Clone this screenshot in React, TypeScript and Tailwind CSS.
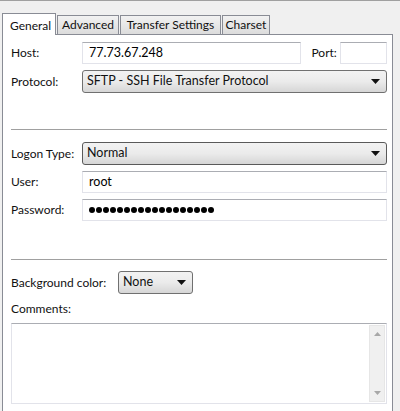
import React from 'react';

const font = { fontFamily: 'Lato, "Liberation Sans", sans-serif' };

const tabs = [
  { label: 'General', w: 'w-[54px]' },
  { label: 'Advanced', w: 'w-[62px]' },
  { label: 'Transfer Settings', w: 'w-[101px]' },
  { label: 'Charset', w: 'w-[48px]' },
];

function Arrow() {
  return (
    <svg width="9" height="5" viewBox="0 0 9 5" className="shrink-0">
      <path d="M0 0 H9 L4.5 5 Z" fill="#111" />
    </svg>
  );
}

function Select({ value, className = '', dark = false }: { value: string; className?: string; dark?: boolean }) {
  return (
    <div
      className={`flex items-center justify-between h-[23px] rounded-[3px] border ${dark ? 'border-[#5a5a5a]' : 'border-[#707070]'} bg-gradient-to-b from-[#f2f2f2] via-[#ebebeb] to-[#d6d6d6] pl-[4px] pr-[6px] text-[12.5px] text-[#111] ${className}`}
    >
      <span>{value}</span>
      <Arrow />
    </div>
  );
}

function Field({ children, className = '' }: { children?: React.ReactNode; className?: string }) {
  return (
    <div
      className={`flex items-center h-[22px] border border-[#e2e3ea] border-t-[#abadb3] bg-white pl-[6px] text-[12.5px] text-black ${className}`}
    >
      {children}
    </div>
  );
}

function Row({ label, children }: { label: string; children: React.ReactNode }) {
  return (
    <div className="flex items-center">
      <div className="w-[71px] shrink-0 text-[12px] text-[#111]">{label}</div>
      {children}
    </div>
  );
}

export default function App() {
  return (
    <div className="w-[400px] h-[411px] bg-[#f0f0f0] border-t border-[#a0a0a0] overflow-hidden" style={font}>
      <div className="flex items-end gap-[1px] pl-[2px] pt-[11px] h-[33px]">
        {tabs.map((t, i) =>
          i === 0 ? (
            <div
              key={t.label}
              className={`relative z-10 h-[22px] -mb-[1px] ${t.w} pl-[7px] pt-[3px] bg-white border border-b-0 border-[#898c95] text-[12px] text-[#111]`}
            >
              {t.label}
            </div>
          ) : (
            <div
              key={t.label}
              className={`h-[19px] ${t.w} text-center bg-gradient-to-b from-[#f2f2f2] to-[#dcdcdc] border border-b-0 border-[#898c95] text-[12px] leading-[18px] text-[#111]`}
            >
              {t.label}
            </div>
          )
        )}
      </div>
      <div className="ml-[2px] w-[391px] h-[390px] bg-white border border-[#898c95] pl-[8px] pr-[5px] pt-[7px]">
        <div className="flex flex-col gap-[6px]">
          <Row label="Host:">
            <Field className="w-[221px]">77.73.67.248</Field>
            <span className="ml-[10px] w-[29px] text-[12px] text-[#111]">Port:</span>
            <Field className="w-[47px]" />
          </Row>
          <Row label="Protocol:">
            <Select value="SFTP - SSH File Transfer Protocol" className="flex-1" />
          </Row>
        </div>
        <div className="mt-[36px] h-px bg-[#a0a0a0]" />
        <div className="mt-[12px] flex flex-col gap-[6px]">
          <Row label="Logon Type:">
            <Select value="Normal" className="flex-1" dark />
          </Row>
          <Row label="User:">
            <Field className="flex-1">root</Field>
          </Row>
          <Row label="Password:">
            <Field className="flex-1">
              <div className="flex gap-[1px]">
                {Array.from({ length: 18 }).map((_, i) => (
                  <span key={i} className="w-[6px] h-[6px] rounded-full bg-black" />
                ))}
              </div>
            </Field>
          </Row>
        </div>
        <div className="mt-[38px] h-px bg-[#a0a0a0]" />
        <div className="mt-[11px] flex items-center">
          <span className="w-[107px] text-[12px] text-[#111]">Background color:</span>
          <Select value="None" className="w-[75px]" />
        </div>
        <div className="mt-[6px] text-[12px] text-[#111]">Comments:</div>
        <div className="mt-[5px] h-[81px] flex justify-end border border-[#e2e3ea] border-t-[#abadb3] bg-white p-[1px]">
          <div className="w-[16px] h-full flex flex-col items-center justify-between py-[6px] bg-[#f0f0f0] border border-[#e6e6e6]">
            <svg width="7" height="4" viewBox="0 0 7 4">
              <path d="M0 4 H7 L3.5 0 Z" fill="#a8a8a8" />
            </svg>
            <svg width="7" height="4" viewBox="0 0 7 4">
              <path d="M0 0 H7 L3.5 4 Z" fill="#a8a8a8" />
            </svg>
          </div>
        </div>
      </div>
    </div>
  );
}
